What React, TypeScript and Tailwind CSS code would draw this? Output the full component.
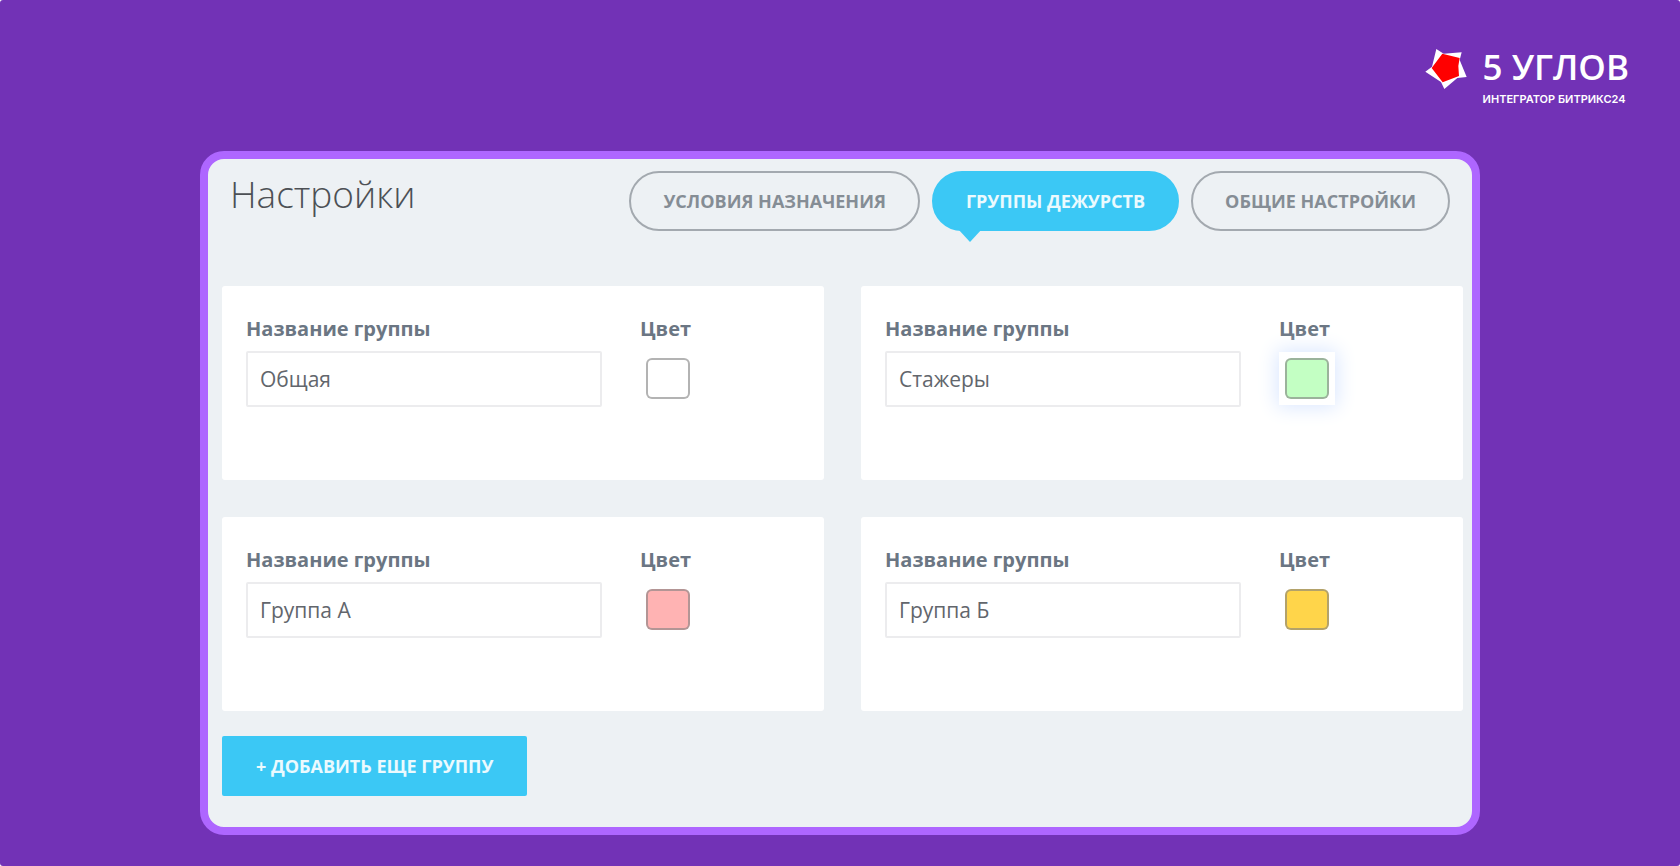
import React, { useState } from "react";

type Group = { id: number; name: string; color: string };

const initialGroups: Group[] = [
  { id: 1, name: "Общая", color: "#ffffff" },
  { id: 2, name: "Стажеры", color: "#c3ffc3" },
  { id: 3, name: "Группа А", color: "#ffb3b3" },
  { id: 4, name: "Группа Б", color: "#ffd54a" },
];

const tabs = ["Условия назначения", "Группы дежурств", "Общие настройки"];

function Logo() {
  return (
    <div className="flex items-start gap-4 text-white">
      <svg viewBox="12 10 126 126" className="mt-0.5 size-[42px]" aria-hidden="true">
        <path fill="#fff" d="M46 13 L68 27 L122 23 L116 46 L137 97 L109 100 L70 133 L60 112 L13 81 L33 66 Z" />
        <path fill="#f00" d="M64 27 L116 40 L112 64 L114 94 L65 113 L32 70 Z" />
      </svg>
      <div className="flex flex-col">
        <span className="font-['Open_Sans'] text-[35px] leading-[42px] font-semibold">5 УГЛОВ</span>
        <span className="mt-[3px] font-['Inter'] text-[11px] leading-4 font-semibold">ИНТЕГРАТОР БИТРИКС24</span>
      </div>
    </div>
  );
}

function GroupCard({
  group,
  focused,
  onChange,
}: {
  group: Group;
  focused: boolean;
  onChange: (group: Group) => void;
}) {
  return (
    <section className="flex h-[194px] items-start gap-[38px] rounded-[3px] bg-white px-6 pt-[31px]">
      <div className="flex w-[356px] flex-col">
        <label htmlFor={`name-${group.id}`} className="text-[20px] leading-6 font-bold text-[#6b7683]">
          Название группы
        </label>
        <input
          id={`name-${group.id}`}
          type="text"
          value={group.name}
          onChange={(e) => onChange({ ...group, name: e.target.value })}
          className="mt-[10px] h-14 w-full rounded-[2px] border-2 border-[#ececee] bg-white px-3 text-[21px] text-[#62666c] outline-none"
        />
      </div>
      <div className="flex flex-col">
        <label htmlFor={`color-${group.id}`} className="text-[20px] leading-6 font-bold text-[#6b7683]">
          Цвет
        </label>
        <input
          id={`color-${group.id}`}
          type="color"
          value={group.color}
          onChange={(e) => onChange({ ...group, color: e.target.value })}
          className={`mt-[11px] h-[53px] w-14 cursor-pointer appearance-none bg-white p-1.5 outline-none [&::-webkit-color-swatch-wrapper]:p-0 [&::-webkit-color-swatch]:rounded-md [&::-webkit-color-swatch]:border-2 [&::-webkit-color-swatch]:border-[#80808099] ${
            focused ? "shadow-[0_0_20px_2px_#d9e6ff]" : ""
          }`}
        />
      </div>
    </section>
  );
}

export default function App() {
  const [groups, setGroups] = useState(initialGroups);
  const [activeTab, setActiveTab] = useState(tabs[1]);

  const update = (next: Group) => setGroups(groups.map((g) => (g.id === next.id ? next : g)));
  const add = () => setGroups([...groups, { id: groups.length + 1, name: "", color: "#ffffff" }]);

  return (
    <div className="min-h-screen rounded-[3px] bg-[#7232b6] pb-[30px] font-['Open_Sans',sans-serif]">
      <header className="flex h-[151px] items-start justify-end pt-[46px] pr-[51px]">
        <Logo />
      </header>
      <main className="mx-auto w-full max-w-[1280px] rounded-3xl border-8 border-[#ae66ff] bg-[#edf1f4] px-[14px] pt-3 pb-[31px]">
        <div className="flex items-start justify-between pr-2 pl-2">
          <h1 className="text-[37px] leading-[46px] font-light text-[#4c5055]">Настройки</h1>
          <nav className="flex gap-3">
            {tabs.map((tab) => (
              <button
                key={tab}
                type="button"
                onClick={() => setActiveTab(tab)}
                className={`relative h-[60px] rounded-full border-2 px-8 text-[18px] font-bold uppercase ${
                  tab === activeTab
                    ? "border-[#3bc8f5] bg-[#3bc8f5] text-white/90"
                    : "border-[#a3a9af] text-[#858d95]"
                }`}
              >
                {tab}
                {tab === activeTab && (
                  <span className="absolute top-full left-6 border-x-[12px] border-t-[13px] border-x-transparent border-t-[#3bc8f5]" />
                )}
              </button>
            ))}
          </nav>
        </div>
        <div className="mt-[55px] mr-[-5px] grid grid-cols-2 gap-[37px]">
          {groups.map((group) => (
            <GroupCard key={group.id} group={group} focused={group.id === 2} onChange={update} />
          ))}
        </div>
        <button
          type="button"
          onClick={add}
          className="mt-[25px] block h-[60px] rounded-[2px] bg-[#3bc8f5] px-[34px] text-[18px] font-bold text-white/90 uppercase"
        >
          + Добавить еще группу
        </button>
      </main>
    </div>
  );
}
